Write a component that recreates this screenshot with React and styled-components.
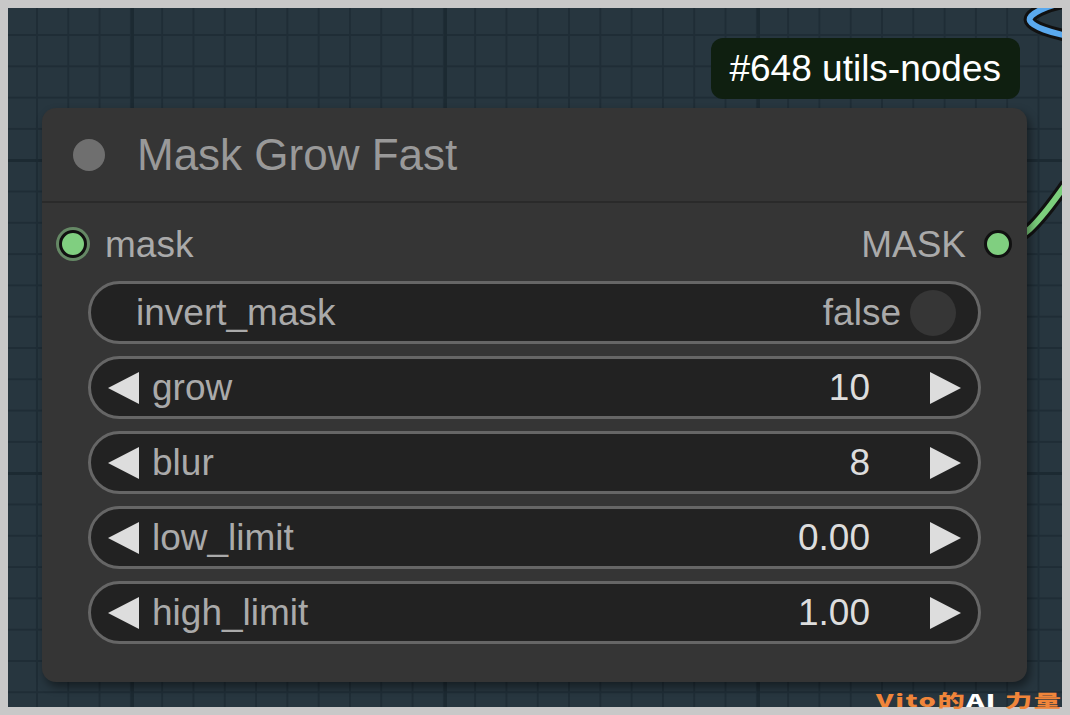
import styled, { createGlobalStyle } from "styled-components";

const GlobalStyle = createGlobalStyle`
    html, body {
        margin: 0;
        padding: 0;
        background: #c8c8c8;
    }
    body {
        font-family: "Liberation Sans", Arial, sans-serif;
    }
`

const widgets = [
    { type: "toggle", name: "invert_mask", value: "false" },
    { type: "number", name: "grow", value: "10" },
    { type: "number", name: "blur", value: "8" },
    { type: "number", name: "low_limit", value: "0.00" },
    { type: "number", name: "high_limit", value: "1.00" },
];

const greenWire = "M 990 236 C 1012 236, 1030 216, 1058 176";
const blueWire = "M 1060 -6 C 1040 -3, 1019 6, 1022 13 C 1025 19, 1044 25, 1060 28";

function App() {
    return (
        <>
            <GlobalStyle />
            <Frame>
                <Canvas>
                    <Wires width="1054" height="699" viewBox="0 0 1054 699">
                        <path d={greenWire} stroke="#111" strokeWidth="12" fill="none" />
                        <path d={greenWire} stroke="#7ccf7c" strokeWidth="6" fill="none" />
                        <path d={blueWire} stroke="#111" strokeWidth="12" fill="none" />
                        <path d={blueWire} stroke="#5aa9ee" strokeWidth="6" fill="none" />
                    </Wires>
                    <Node>
                        <Badge>#648 utils-nodes</Badge>
                        <TitleBar>
                            <TitleDot />
                            <Title>Mask Grow Fast</Title>
                        </TitleBar>
                        <Body>
                            <SlotRow>
                                <Slot>
                                    <SlotDot glow />
                                    <SlotName>mask</SlotName>
                                </Slot>
                                <Slot>
                                    <SlotName>MASK</SlotName>
                                    <SlotDot />
                                </Slot>
                            </SlotRow>
                            {widgets.map((w) =>
                                w.type === "toggle" ? (
                                    <Widget key={w.name} toggle>
                                        <Label>{w.name}</Label>
                                        <ToggleValue>{w.value}</ToggleValue>
                                        <Knob />
                                    </Widget>
                                ) : (
                                    <Widget key={w.name}>
                                        <Arrow left />
                                        <Label arrowed>{w.name}</Label>
                                        <Value>{w.value}</Value>
                                        <Arrow />
                                    </Widget>
                                )
                            )}
                        </Body>
                    </Node>
                </Canvas>
                <Watermark>Vito的<span>AI</span>力量</Watermark>
            </Frame>
        </>
    )
}

export default App;

const Frame = styled.div`
    position: relative;
    width: 1070px;
    height: 715px;
    box-sizing: border-box;
    padding: 8px;
    background: #c8c8c8;
    overflow: hidden;
`

const Canvas = styled.div`
    position: relative;
    width: 1054px;
    height: 699px;
    box-sizing: border-box;
    padding: 100px 0 0 34px;
    overflow: hidden;
    background-color: #27363f;
    background-image:
        linear-gradient(90deg, #1c2a32 0 3px, transparent 3px),
        linear-gradient(0deg, #1c2a32 0 3px, transparent 3px),
        linear-gradient(90deg, #1f2d36 0 2px, transparent 2px),
        linear-gradient(0deg, #1f2d36 0 2px, transparent 2px);
    background-size: 313px 100%, 100% 313px, 31.3px 100%, 100% 31.3px;
    background-position: 123px 0, 0 154px, 28px 0, 0 28px;
`

const Wires = styled.svg`
    position: absolute;
    left: 0;
    top: 0;
`

const Node = styled.div`
    position: relative;
    width: 985px;
    height: 574px;
    box-sizing: border-box;
    background: #353535;
    border-radius: 14px;
    box-shadow: 3px 5px 10px rgba(0, 0, 0, 0.45);
    display: flex;
    flex-direction: column;
`

const Badge = styled.div`
    position: absolute;
    top: -70px;
    right: 7px;
    height: 61px;
    padding: 0 19px 0 18px;
    display: flex;
    align-items: center;
    background: #0f1f10;
    border-radius: 12px;
    color: #fff;
    font-size: 37px;
    white-space: nowrap;
`

const TitleBar = styled.div`
    height: 93px;
    display: flex;
    align-items: center;
    padding-left: 31px;
    gap: 32px;
    border-bottom: 2px solid #2a2a2a;
`

const TitleDot = styled.div`
    width: 32px;
    height: 32px;
    border-radius: 50%;
    background: #6f6f6f;
`

const Title = styled.span`
    font-size: 44px;
    color: #999;
    line-height: 1;
`

const Body = styled.div`
    display: flex;
    flex-direction: column;
    align-items: center;
    gap: 12px;
`

const SlotRow = styled.div`
    align-self: stretch;
    height: 74px;
    padding: 4px 15px 0 17px;
    margin-bottom: -12px;
    display: flex;
    justify-content: space-between;
    align-items: center;
`

const Slot = styled.div`
    display: flex;
    align-items: center;
    gap: 18px;
`

const SlotDot = styled.div`
    width: 22px;
    height: 22px;
    border-radius: 50%;
    border: 3px solid #111;
    background: #80cf80;
    box-shadow: ${({ glow }) => glow ? "0 0 0 3px rgba(150, 220, 150, 0.5)" : "none"};
`

const SlotName = styled.span`
    font-size: 37px;
    color: #aaa;
    line-height: 1;
`

const Widget = styled.div`
    width: 893px;
    height: 63px;
    box-sizing: border-box;
    border: 3px solid #666;
    border-radius: 32px;
    background: #222;
    display: flex;
    align-items: center;
    padding: ${({ toggle }) => toggle ? "0 22px 0 45px" : "0 17px"};
    font-size: 37px;
`

const Label = styled.span`
    color: #aaa;
    flex: 1;
    line-height: 1;
    margin-left: ${({ arrowed }) => arrowed ? "13px" : "0"};
`

const Value = styled.span`
    color: #ddd;
    line-height: 1;
    margin-right: 60px;
`

const ToggleValue = styled.span`
    color: #aaa;
    line-height: 1;
    margin-right: 9px;
`

const Knob = styled.div`
    width: 46px;
    height: 46px;
    border-radius: 50%;
    background: #363636;
`

const Arrow = styled.div`
    width: 0;
    height: 0;
    border-top: 16px solid transparent;
    border-bottom: 16px solid transparent;
    ${({ left }) => left
        ? "border-right: 31px solid #ddd;"
        : "border-left: 31px solid #ddd;"}
`

const Watermark = styled.div`
    position: absolute;
    right: 7px;
    bottom: 7px;
    line-height: 1;
    font-family: "Noto Sans CJK SC", sans-serif;
    font-weight: 900;
    font-size: 17px;
    color: #f0853a;
    letter-spacing: 1px;
    white-space: nowrap;
    transform: scaleX(1.6);
    transform-origin: right bottom;
    span {
        color: #fff;
        margin-right: 5px;
    }
`
